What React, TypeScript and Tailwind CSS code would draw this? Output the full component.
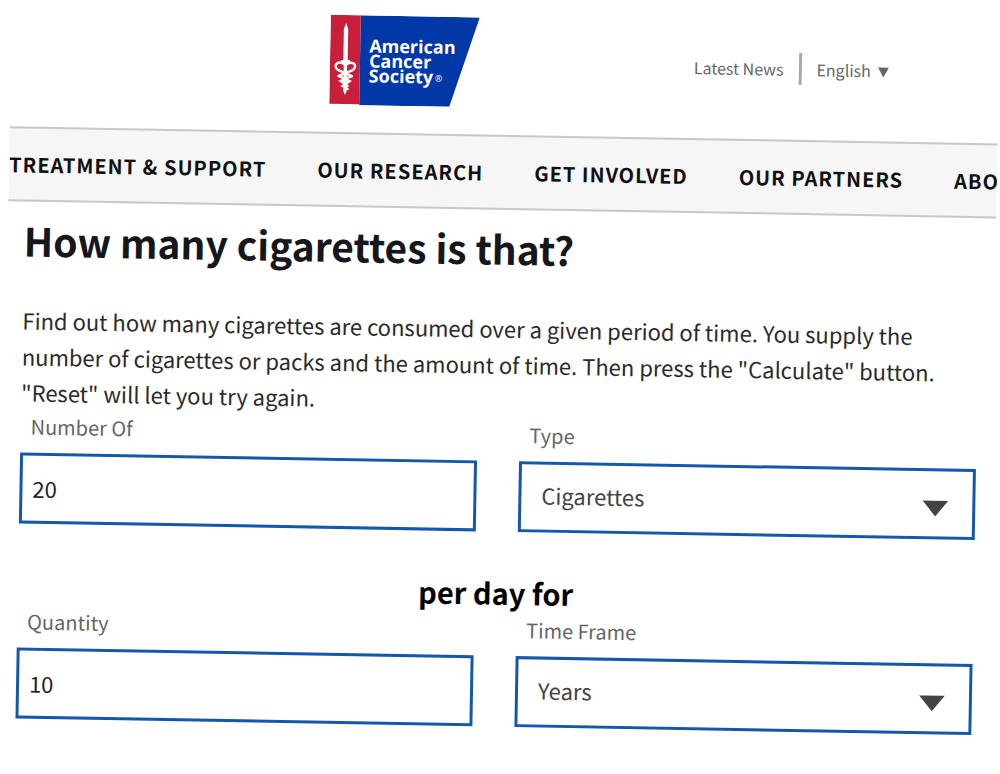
import React from "react";

const NAV_ITEMS = [
  "TREATMENT & SUPPORT",
  "OUR RESEARCH",
  "GET INVOLVED",
  "OUR PARTNERS",
  "ABOUT US",
];

function Logo() {
  return (
    <svg
      viewBox="0 0 149 90"
      className="h-[90px] w-[149px]"
      role="img"
      aria-label="American Cancer Society"
    >
      <path d="M30 0H149L120 90H30Z" fill="#0038a8" />
      <path d="M0 0H30V89H0Z" fill="#c8203b" />
      <path d="M15.5 8L17.7 14V45H20V48H17.2V76L15.5 80L13.8 76V48H11V45H13.3V14Z" fill="#fff" />
      <g fill="none" stroke="#fff" strokeWidth="2.4" strokeLinecap="round">
        <path d="M14 49C7 45 3 51 8 55L22 61" />
        <path d="M17 49C24 45 28 51 23 55L9 61" />
        <path d="M9 61L20 66L13 71L18 74" />
        <path d="M22 61L11 66L18 71" />
      </g>
      <g fill="#fff" fontFamily='"Open Sans", "Noto Sans", sans-serif' fontWeight="700" fontSize="18">
        <text x="39" y="37">American</text>
        <text x="39" y="52">Cancer</text>
        <text x="39" y="67">Society</text>
        <text x="105" y="65" fontSize="9" fontWeight="400">®</text>
      </g>
    </svg>
  );
}

function DownTriangle({ className }: { className: string }) {
  return (
    <svg viewBox="0 0 26 16" preserveAspectRatio="none" className={className} aria-hidden="true">
      <path d="M0 0H26L13 16Z" fill="currentColor" />
    </svg>
  );
}

function TextField({ id, label, value }: { id: string; label: string; value: string }) {
  return (
    <div className="flex min-w-0 flex-1 flex-col">
      <label htmlFor={id} className="pl-2.5 text-[20px] leading-7 text-[#666]">
        {label}
      </label>
      <input
        id={id}
        type="text"
        defaultValue={value}
        className="mt-3 h-[71px] w-full border-3 border-[#1458ab] bg-white px-2.5 pb-0.5 text-[22px] text-[#222] outline-none"
      />
    </div>
  );
}

function SelectField({ id, label, options }: { id: string; label: string; options: string[] }) {
  return (
    <div className="flex min-w-0 flex-1 flex-col">
      <label htmlFor={id} className="pl-2.5 text-[20px] leading-7 text-[#666]">
        {label}
      </label>
      <div className="relative mt-3">
        <select
          id={id}
          className="h-[71px] w-full appearance-none border-3 border-[#1458ab] bg-white pr-16 pb-1 pl-5 text-[22px] text-[#444] outline-none"
        >
          {options.map((option) => (
            <option key={option}>{option}</option>
          ))}
        </select>
        <DownTriangle className="pointer-events-none absolute top-8 right-[27px] h-4 w-[26px] text-[#444]" />
      </div>
    </div>
  );
}

export default function App() {
  return (
    <div className="min-h-screen overflow-hidden bg-white font-['Noto_Sans_CJK_SC',sans-serif]">
      <div className="origin-top-left rotate-1 pl-3">
        <header className="flex h-[126px] items-start justify-between pt-[9px] pr-[110px] pl-[319px]">
          <a href="#home">
            <Logo />
          </a>
          <div className="flex items-center pt-[30px] text-[16px] leading-8 text-[#666]">
            <a href="#news">Latest News</a>
            <span className="mx-[15px] h-8 w-[3px] bg-[#aaa]" />
            <button type="button" className="flex items-center gap-[7px]">
              English
              <DownTriangle className="mt-1 h-2.5 w-[11px]" />
            </button>
          </div>
        </header>

        <nav className="flex h-[75px] items-center gap-[51px] overflow-hidden border-y-2 border-[#c8c8c8] bg-[#f6f6f6] text-[20px] leading-8 font-bold tracking-[1px] whitespace-nowrap text-[#111]">
          {NAV_ITEMS.map((item) => (
            <a key={item} href="#section">
              {item}
            </a>
          ))}
        </nav>

        <main className="px-4 pt-2.5">
          <h1 className="text-[39px] leading-[56px] font-bold text-[#16171c]">
            How many cigarettes is that?
          </h1>
          <p className="mt-[34px] text-[22px] leading-9 text-[#2b2b2b]">
            Find out how many cigarettes are consumed over a given period of time. You supply the
            number of cigarettes or packs and the amount of time. Then press the "Calculate" button.
            "Reset" will let you try again.
          </p>
          <form>
            <div className="mt-[3px] flex gap-[42px]">
              <TextField id="number" label="Number Of" value="20" />
              <SelectField id="type" label="Type" options={["Cigarettes", "Packs"]} />
            </div>
            <h2 className="mt-[38px] pb-0.5 text-center text-[29px] leading-[44px] font-bold text-black">
              per day for
            </h2>
            <div className="flex gap-[42px]">
              <TextField id="quantity" label="Quantity" value="10" />
              <SelectField id="timeframe" label="Time Frame" options={["Years", "Months", "Weeks", "Days"]} />
            </div>
          </form>
        </main>
      </div>
    </div>
  );
}
